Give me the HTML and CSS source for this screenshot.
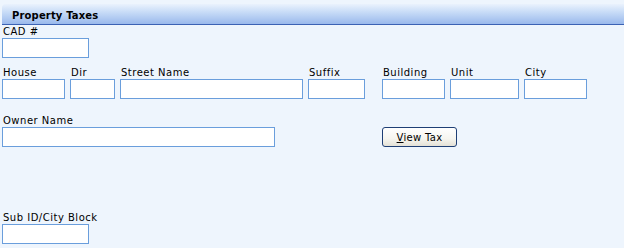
FILE: index.html
```html
<!DOCTYPE html>
<html>
<head>
<meta charset="utf-8">
<link rel="stylesheet" href="styles.css">
</head>
<body>
<div class="header"><span class="title">Property Taxes</span></div>
<div class="row row-cad">
  <div class="field"><label class="lbl">CAD #</label><input class="inp w87" type="text"></div>
</div>
<div class="row row-addr">
  <div class="field"><label class="lbl">House</label><input class="inp w63" type="text"></div>
  <div class="field"><label class="lbl">Dir</label><input class="inp w45" type="text"></div>
  <div class="field"><label class="lbl">Street Name</label><input class="inp w183" type="text"></div>
  <div class="field"><label class="lbl">Suffix</label><input class="inp w57" type="text"></div>
  <div class="field gapl"><label class="lbl">Building</label><input class="inp w63" type="text"></div>
  <div class="field"><label class="lbl">Unit</label><input class="inp w69" type="text"></div>
  <div class="field"><label class="lbl">City</label><input class="inp w63" type="text"></div>
</div>
<div class="row row-owner">
  <div class="field"><label class="lbl">Owner Name</label><input class="inp w273" type="text"></div>
  <div class="btnwrap"><button class="btn" type="button"><u>V</u>iew Tax</button></div>
</div>
<div class="row row-sub">
  <div class="field"><label class="lbl">Sub ID/City Block</label><input class="inp w87" type="text"></div>
</div>
</body>
</html>
```
FILE: styles.css
```css
html, body {
  margin: 0;
  padding: 0;
  background: #eef5fd;
}
body {
  padding: 4px 0 0 2px;
  font-family: "DejaVu Sans", Verdana, sans-serif;
  font-size: 10px;
  color: #000;
}
.header {
  height: 20px;
  border-bottom: 1px solid #3b62b4;
  border-top-left-radius: 4px;
  background: linear-gradient(#eaf2fd 0%, #c8dcf7 40%, #9ab9ec 100%);
  display: flex;
  align-items: center;
  padding-left: 10px;
}
.title {
  font-weight: bold;
  font-size: 10px;
  letter-spacing: 0.15px;
  padding-top: 2px;
}
.row {
  display: flex;
  gap: 5px;
  align-items: flex-end;
}
.field {
  display: flex;
  flex-direction: column;
}
.lbl {
  line-height: 12px;
  height: 12px;
  padding-left: 1px;
  letter-spacing: 0.5px;
  white-space: nowrap;
}
.inp {
  box-sizing: border-box;
  height: 20px;
  margin: 0;
  border: 1px solid #6a9edc;
  background: #fff;
  padding: 0 2px;
  font: inherit;
}
.row-cad { margin-top: 1px; }
.row-addr { margin-top: 9px; }
.row-owner { margin-top: 16px; gap: 0; }
.row-sub { margin-top: 65px; }
.gapl { margin-left: 12px; }
.w87 { width: 87px; }
.w63 { width: 63px; }
.w45 { width: 45px; }
.w183 { width: 183px; }
.w57 { width: 57px; }
.w69 { width: 69px; }
.w273 { width: 273px; }
.btnwrap { margin-left: 107px; }
.btn {
  box-sizing: border-box;
  width: 75px;
  height: 20px;
  margin: 0;
  padding: 0;
  border: 1px solid #1f3f75;
  border-radius: 3px;
  background: linear-gradient(#ffffff 0%, #f6f5ef 60%, #e4e1d6 100%);
  font-family: "DejaVu Sans", Verdana, sans-serif;
  font-size: 10px;
  letter-spacing: 0.3px;
  color: #000;
}
```
